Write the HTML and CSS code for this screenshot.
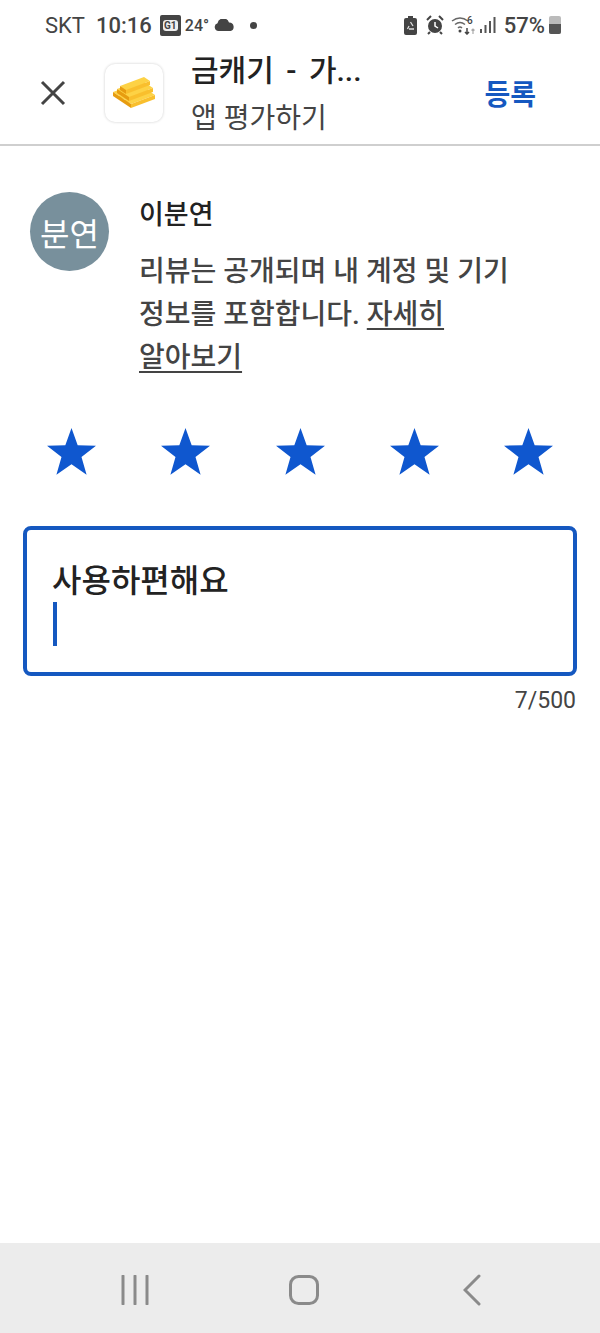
FILE: index.html
```html
<!DOCTYPE html>
<html lang="ko">
<head>
    <meta charset="UTF-8">
    <title>앱 평가하기</title>
    <link rel="stylesheet" href="styles.css">
</head>
<body>

<div class="status-bar">
    <span class="carrier">SKT</span>
    <span class="clock">10:16</span>
    <span class="badge"><span class="badge-text">G1</span></span>
    <span class="temp">24°</span>
    <svg class="cloud" width="21" height="12" viewBox="0 0 21 12"><path d="M4.500 12a4 4 0 0 1-1-7.800A6 6 0 0 1 15 3.400 4.400 4.400 0 0 1 16.500 12z" fill="#444"/></svg>
    <span class="dot"></span>
    <span class="status-right">
        <svg width="13" height="19" viewBox="0 0 13 19"><path d="M4 0h5v2h2a2 2 0 0 1 2 2v13a2 2 0 0 1-2 2H2a2 2 0 0 1-2-2V4a2 2 0 0 1 2-2h2z" fill="#444"/><path d="M6.500 6l2.500 4M3.500 13l1.500-3M10 13H5" stroke="#ddd" stroke-width="1.300" fill="none"/></svg>
        <svg class="alarm" width="18" height="20" viewBox="0 0 18 20"><circle cx="9" cy="11" r="7" fill="#444"/><path d="M9 7v4l3 2" stroke="#fff" stroke-width="1.500" fill="none"/><path d="M1 5l4-4M17 5l-4-4M4 17l-2 2M14 17l2 2" stroke="#444" stroke-width="2"/></svg>
        <svg class="wifi" width="26" height="20" viewBox="0 0 26 20"><path d="M1 6q8-6 16 0M4 9.500q5-4 10 0M7 13q2-2 4 0" stroke="#666" stroke-width="1.500" fill="none"/><circle cx="9" cy="16" r="1.500" fill="#444"/><path d="M16 13v6M14 17l2 2 2-2" stroke="#444" stroke-width="1.500" fill="none"/><path d="M22 19v-5M20.500 15.500l1.500-1.500 1.500 1.500" stroke="#aaa" stroke-width="1.200" fill="none"/><text x="16" y="9" font-size="10" font-family="Roboto, sans-serif" font-weight="500" fill="#444">6</text></svg>
        <svg class="signal" width="16" height="16" viewBox="0 0 16 16"><path d="M1 12v4M5.500 8v8M10 4v12M14.500 0v16" stroke="#555" stroke-width="2"/></svg>
        <span class="battery-text">57%</span>
        <span class="battery"><span class="battery-fill"></span></span>
    </span>
</div>

<header class="top-bar">
    <svg class="close" width="26" height="26" viewBox="0 0 26 26"><path d="M2 2l22 22M24 2L2 24" stroke="#444" stroke-width="3" fill="none"/></svg>
    <div class="app-icon">
        <svg width="46" height="32" viewBox="0 0 46 32">
            <defs>
                <g id="bar">
                    <path d="M0 0L24-9 30-5 6 4z" fill="#fdd245"/>
                    <path d="M6 4L30-5V-1L6 8z" fill="#f9bf2d"/>
                    <path d="M0 0L6 4V8L0 4z" fill="#e79c10"/>
                </g>
            </defs>
            <use href="#bar" x="2" y="15"/>
            <use href="#bar" x="8" y="19"/>
            <use href="#bar" x="14" y="23"/>
            <use href="#bar" x="6" y="12"/>
            <use href="#bar" x="12" y="16"/>
            <use href="#bar" x="9" y="9"/>
        </svg>
    </div>
    <div class="app-info">
        <div class="app-name">금캐기 - 가...</div>
        <div class="app-sub">앱 평가하기</div>
    </div>
    <a class="submit">등록</a>
</header>

<main class="content">
    <section class="profile">
        <div class="avatar">분연</div>
        <div class="profile-text">
            <div class="user-name">이분연</div>
            <div class="notice">
                <div>리뷰는 공개되며 내 계정 및 기기</div>
                <div>정보를 포함합니다. <a class="more">자세히</a></div>
                <div><a class="more">알아보기</a></div>
            </div>
        </div>
    </section>

    <div class="stars">
        <svg viewBox="0 0 50 48"><path d="M25 0l6.300 17.500 18.700.6-14.800 11.500 5.200 18L25 37.100 9.600 47.600l5.200-18L0 18.100l18.700-.6z"/></svg>
        <svg viewBox="0 0 50 48"><path d="M25 0l6.300 17.500 18.700.6-14.800 11.500 5.200 18L25 37.100 9.600 47.600l5.200-18L0 18.100l18.700-.6z"/></svg>
        <svg viewBox="0 0 50 48"><path d="M25 0l6.300 17.500 18.700.6-14.800 11.500 5.200 18L25 37.100 9.600 47.600l5.200-18L0 18.100l18.700-.6z"/></svg>
        <svg viewBox="0 0 50 48"><path d="M25 0l6.300 17.500 18.700.6-14.800 11.500 5.200 18L25 37.100 9.600 47.600l5.200-18L0 18.100l18.700-.6z"/></svg>
        <svg viewBox="0 0 50 48"><path d="M25 0l6.300 17.500 18.700.6-14.800 11.500 5.200 18L25 37.100 9.600 47.600l5.200-18L0 18.100l18.700-.6z"/></svg>
    </div>

    <div class="review-box">
        <div class="review-text">사용하편해요</div>
        <div class="caret"></div>
    </div>
    <div class="counter">7/500</div>
</main>

<nav class="nav-bar">
    <svg width="28" height="30" viewBox="0 0 28 30"><path d="M2 1v28M14 1v28M26 1v28" stroke="#8a8a8a" stroke-width="3" stroke-linecap="round" fill="none"/></svg>
    <svg class="nav-home" width="30" height="30" viewBox="0 0 30 30"><rect x="1.500" y="1.500" width="27" height="27" rx="8" stroke="#8a8a8a" stroke-width="3" fill="none"/></svg>
    <svg width="18" height="32" viewBox="0 0 18 32"><path d="M16 2L2 16l14 14" stroke="#8a8a8a" stroke-width="3" stroke-linecap="round" fill="none"/></svg>
</nav>

</body>
</html>
```

FILE: styles.css
```css
* {
    box-sizing: border-box;
}

body {
    font-family: Roboto, "Noto Sans CJK KR", sans-serif;
    background: white;
    margin: 0;
    width: 600px;
    height: 1333px;
    display: flex;
    flex-direction: column;
    color: #222;
}

.status-bar {
    height: 48px;
    padding: 2px 39px 0 45px;
    display: flex;
    align-items: center;
    color: #444;
}

.carrier {
    font-size: 22px;
    margin-right: 11px;
}

.clock {
    font-size: 22px;
    font-weight: 500;
    margin-right: 8px;
}

.badge {
    width: 21px;
    height: 21px;
    border-radius: 2px;
    background: #444;
    display: flex;
    align-items: center;
    justify-content: center;
    margin-right: 4px;
}

.badge-text {
    background: #eee;
    color: #444;
    border-radius: 3px;
    font-size: 10px;
    line-height: 11px;
    font-weight: 700;
    padding: 0 1px;
}

.temp {
    font-size: 16px;
    font-weight: 500;
    margin-right: 5px;
}

.dot {
    width: 7px;
    height: 7px;
    border-radius: 50%;
    background: #444;
    margin-left: 15px;
}

.status-right {
    margin-left: auto;
    display: flex;
    align-items: center;
}

.alarm {
    margin-left: 9px;
}

.wifi {
    margin-left: 7px;
}

.signal {
    margin-left: 3px;
}

.battery-text {
    font-size: 22px;
    font-weight: 500;
    margin-left: 8px;
}

.battery {
    width: 12px;
    height: 18px;
    margin-left: 4px;
    background: #bbb;
    border-radius: 2px;
    display: flex;
    align-items: flex-end;
}

.battery-fill {
    width: 100%;
    height: 10px;
    background: #555;
    border-radius: 0 0 2px 2px;
}

.top-bar {
    height: 98px;
    border-bottom: 2px solid #cfcfcf;
    display: flex;
    align-items: center;
    padding: 0 64px 6px 40px;
}

.close {
    margin-right: 39px;
}

.app-icon {
    width: 58px;
    height: 58px;
    border-radius: 10px;
    background: white;
    box-shadow: 0 0 3px rgba(0, 0, 0, 0.2);
    display: flex;
    align-items: center;
    justify-content: center;
    margin-right: 28px;
}

.app-info {
    flex: 1;
    padding-top: 4px;
}

.app-name {
    font-size: 30px;
    line-height: 46px;
    font-weight: 500;
    word-spacing: 5px;
    color: #222;
}

.app-sub {
    font-size: 28px;
    line-height: 46px;
    margin-top: 2px;
    color: #444;
}

.submit {
    font-size: 28px;
    font-weight: 700;
    color: #1558c0;
}

.content {
    flex: 1;
    padding: 46px 23px 0;
}

.profile {
    display: flex;
    padding-left: 7px;
}

.avatar {
    width: 79px;
    height: 79px;
    border-radius: 50%;
    background: #78909c;
    color: white;
    font-size: 32px;
    display: flex;
    align-items: center;
    justify-content: center;
    flex-shrink: 0;
    margin-right: 30px;
}

.profile-text {
    width: 375px;
}

.user-name {
    font-size: 27px;
    font-weight: 500;
    line-height: 42px;
    margin-top: 2px;
    color: #222;
}

.notice {
    margin-top: 14px;
    font-size: 28px;
    line-height: 43px;
    color: #444;
    font-weight: 500;
}

.more {
    text-decoration: underline;
    text-underline-offset: 4px;
}

.stars {
    display: flex;
    justify-content: space-between;
    padding: 0 24px;
    margin-top: 48px;
}

.stars svg {
    width: 49px;
    height: 49px;
    fill: #0f57cf;
}

.review-box {
    margin-top: 50px;
    height: 150px;
    border: 4px solid #1558c0;
    border-radius: 8px;
    padding: 30px 25px 0;
}

.review-text {
    font-size: 32px;
    line-height: 42px;
    font-weight: 500;
    color: #222;
}

.caret {
    width: 4px;
    height: 44px;
    margin-left: 1px;
    background: #1558c0;
}

.counter {
    text-align: right;
    font-size: 23px;
    line-height: 26px;
    margin-top: 12px;
    padding-right: 1px;
    color: #444;
}

.nav-bar {
    height: 90px;
    background: #ececec;
    display: flex;
    align-items: center;
    padding: 3px 119px 0 121px;
    justify-content: space-between;
}

.nav-home {
    margin-right: 4px;
}
```
